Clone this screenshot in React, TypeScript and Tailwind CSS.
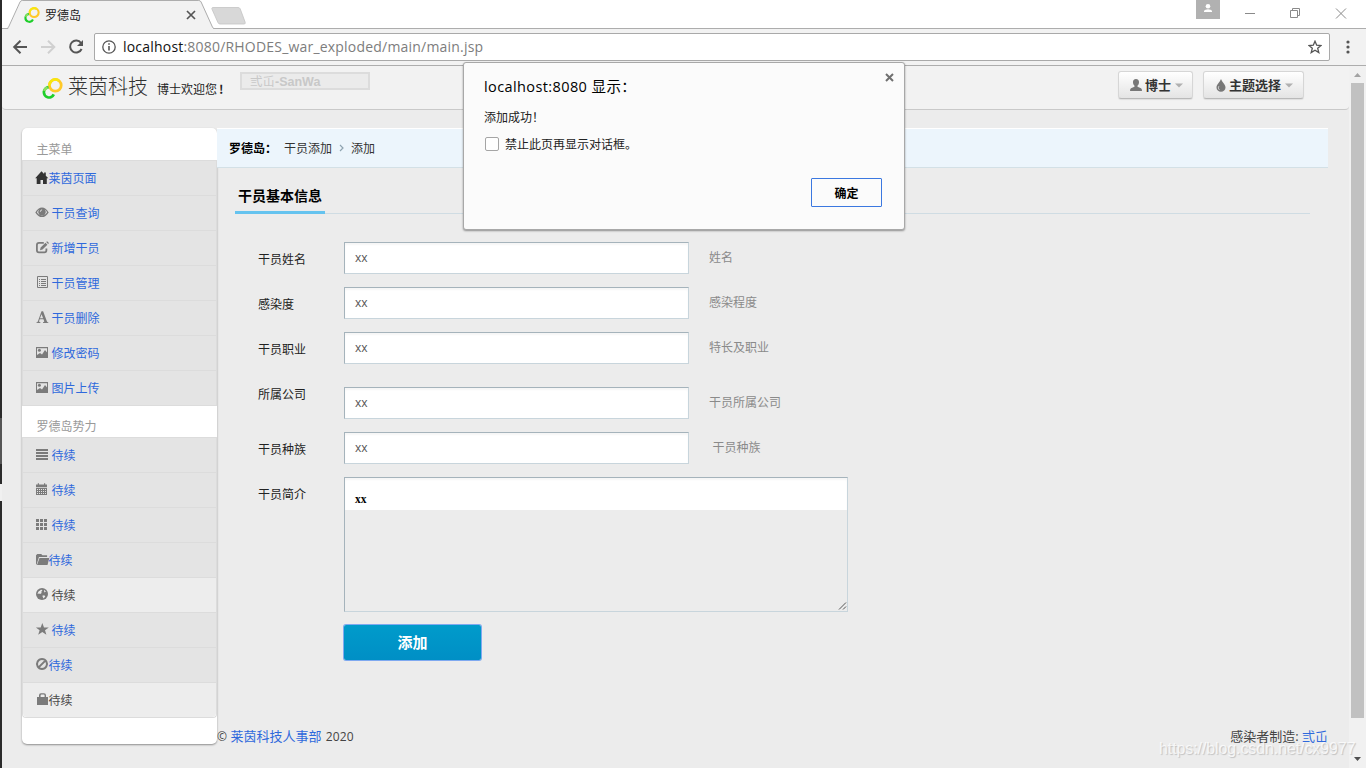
import type { ReactNode } from 'react';

const g = '#7b7b7b';

function Logo({ className }: { className: string }) {
  return (
    <svg className={className} viewBox="0 0 20 20" fill="none">
      <path d="M7 8.700A4.900 4.900 0 1 0 11.200 15.600" stroke="#1fce2b" strokeWidth="2.600" />
      <path d="M2.100 12.200a4.900 4.900 0 0 1 3.200-3.300" stroke="#8be060" strokeWidth="2.600" />
      <circle cx="12.700" cy="7" r="5.600" stroke="#ffc928" strokeWidth="2.600" />
      <path d="M7.100 7a5.600 5.600 0 0 1 9-4.400" stroke="#f8e60e" strokeWidth="2.600" />
    </svg>
  );
}

function Icon({ children, w = 14 }: { children: ReactNode; w?: number }) {
  return (
    <svg width={w} height="14" viewBox={`0 0 ${w} 14`} fill={g} className="shrink-0 overflow-visible">
      {children}
    </svg>
  );
}

const icons: Record<string, ReactNode> = {
  home: <path fill="#333" d="M5.500 .3-.8 7.200H.7V13h3.800V9h2.500v4h3.800V7.200H12.300L9.800 4.700V1.500H8.100v1.400z" />,
  eye: (
    <>
      <path fillRule="evenodd" d="M-.7 6.400C1.300 3.200 3.500 1.500 6 1.500S10.700 3.200 12.700 6.400C10.700 9.600 8.500 11.100 6 11.100S1.300 9.600-.7 6.400zM.9 6.300C2.300 8.600 4.100 9.800 6 9.800s3.700-1.200 5.100-3.500C10.300 5 9.400 4.100 8.600 3.600a3.600 3.600 0 1 1-5.200 0C2.600 4.100 1.700 5 .9 6.300z" />
      <circle cx="6" cy="5.700" r="2.600" />
      <path d="M4.300 5.800a2 2 0 0 1 1.800-2" stroke="#e4e4e4" strokeWidth=".9" fill="none" />
    </>
  ),
  edit: (
    <>
      <path d="M7.800 1.900H3A2.100 2.100 0 0 0 .9 4v5.300A2.100 2.100 0 0 0 3 11.400h5.300a2.100 2.100 0 0 0 2.100-2.100V7.500" fill="none" stroke={g} strokeWidth="1.800" />
      <path d="M4 9.200l.6-2.600L9.500 1.800l1.900 1.900L6.500 8.500zM10.200 1.100l.9-.9 1.900 1.900-.9.900z" />
    </>
  ),
  list: (
    <>
      <path d="M1.500 .5h10v11h-10z" fill="none" stroke={g} strokeWidth="1" />
      <path d="M3 3h1v1H3zM5 3h5v1H5zM3 5h1v1H3zM5 5h5v1H5zM3 7h1v1H3zM5 7h5v1H5zM3 9h1v1H3zM5 9h5v1H5z" />
    </>
  ),
  font: <path fillRule="evenodd" d="M.5 12v-.8c.9-.1 1.200-.5 1.500-1.300L5.500.3h1.600l3.700 9.600c.3.8.7 1.200 1.500 1.300v.8H7v-.8c1.200-.1 1.400-.4 1.100-1.200L7.500 8.300H3.700l-.5 1.500c-.3.900.1 1.300 1.200 1.400v.8zM4 7.300h3.100L5.600 3.200z" />,
  image: (
    <>
      <path fillRule="evenodd" d="M0 1h12v11H0zM1 2.200v8.300h10V2.200z" />
      <circle cx="3.400" cy="4.300" r="1.500" />
      <path d="M1 11V9l3-2 2 1.500L9 4l2.500 3v4z" />
    </>
  ),
  lines: <path d="M0 1h12v2H0zM0 4h12v2H0zM0 7h12v2H0zM0 10h12v2H0z" />,
  calendar: (
    <>
      <path d="M0 1.500h1.800V.3h1.200v1.200h5V.3h1.200v1.200H11V4H0zM0 4.700h11V12H0z" />
      <path d="M1 6h1v1H1zM3 6h1v1H3zM5 6h1v1H5zM7 6h1v1H7zM9 6h1v1H9zM1 8h1v1H1zM3 8h1v1H3zM5 8h1v1H5zM7 8h1v1H7zM9 8h1v1H9zM1 10h1v1H1zM3 10h1v1H3zM5 10h1v1H5zM7 10h1v1H7zM9 10h1v1H9z" fill="#e4e4e4" />
    </>
  ),
  grid: <path d="M0 1h3v3H0zM4 1h3v3H4zM8 1h3v3H8zM0 5h3v3H0zM4 5h3v3H4zM8 5h3v3H8zM0 9h3v3H0zM4 9h3v3H4zM8 9h3v3H8z" />,
  folder: <path d="M0 11.500V2.300L1.300 1h3.900l1.200 1.200h4.700V4H3L.6 11.500zM3.500 4.900H13.300L11.500 12H1z" />,
  globe: (
    <>
      <circle cx="6" cy="6" r="6" />
      <path d="M2.300 3.700 5 1.800l1.500.2L5.300 3.800 5.600 5 4.200 6 3 5.500 1.500 6zM8 1.700l2.300 2.200-1-.1L8.300 4.600zM6.300 7.800l1.900-.6L9.300 8.500 7.500 10.400z" fill="#ececec" />
    </>
  ),
  star: <path d="M6.300 0 8 4.400h4.800L9 7.200l1.400 4.600-4.100-2.800-4.100 2.800L3.600 7.200-.1 4.400h4.800z" />,
  ban: <path d="M6 1a5 5 0 1 0 .01 0M2.600 9.400 9.400 2.600" fill="none" stroke={g} strokeWidth="2" />,
  lock: <path fillRule="evenodd" d="M1 4h2V2.200A2 2 0 0 1 5 .2h3a2 2 0 0 1 2 2V4H12v8H1zM4.600 4h4V2.500a.9.9 0 0 0-.9-.9H5.500a.9.9 0 0 0-.9.9z" />,
};

type Item = { icon: string; label: string; tight?: boolean; plain?: boolean };

const mainMenu: Item[] = [
  { icon: 'home', label: '莱茵页面', tight: true },
  { icon: 'eye', label: '干员查询' },
  { icon: 'edit', label: '新增干员' },
  { icon: 'list', label: '干员管理' },
  { icon: 'font', label: '干员删除' },
  { icon: 'image', label: '修改密码' },
  { icon: 'image', label: '图片上传' },
];

const forceMenu: Item[] = [
  { icon: 'lines', label: '待续' },
  { icon: 'calendar', label: '待续' },
  { icon: 'grid', label: '待续' },
  { icon: 'folder', label: '待续', tight: true },
  { icon: 'globe', label: '待续', plain: true },
  { icon: 'star', label: '待续' },
  { icon: 'ban', label: '待续', tight: true },
  { icon: 'lock', label: '待续', tight: true, plain: true },
];

function Menu({ items, last }: { items: Item[]; last?: boolean }) {
  return (
    <ul className={`border-x border-b border-[#dcdcdc] ${last ? 'rounded-b-[4px]' : ''}`}>
      {items.map((it, i) => (
        <li
          key={i}
          className={`flex h-[35px] items-center border-t border-[#dcdcdc] pl-[13px] ${it.plain ? 'bg-[#ededed] text-[#4a4a4a]' : 'bg-[#e4e4e4] text-[#2f69dc]'} ${last && i === items.length - 1 ? 'rounded-b-[4px]' : ''}`}
        >
          <Icon>{icons[it.icon]}</Icon>
          <span className={it.tight ? '-ml-[1.500px]' : 'ml-[1.500px]'}>{it.label}</span>
        </li>
      ))}
    </ul>
  );
}

const fields = [
  { label: '干员姓名', hint: '姓名' },
  { label: '感染度', hint: '感染程度' },
  { label: '干员职业', hint: '特长及职业' },
  { label: '所属公司', hint: '干员所属公司', low: true },
  { label: '干员种族', hint: '干员种族', shift: true },
];

function TabStrip() {
  return (
    <div className="relative flex h-[28px] bg-white">
      <svg className="absolute left-0 top-0" width="260" height="29" viewBox="0 0 260 29">
        <path d="M6 29 18.500 2q.6-1.500 2-1.500H197q1.500 0 2.200 1.500L211.500 29z" fill="#f2f2f2" />
        <path d="M0 28.500H4.500q1.400 0 2-1.300L18 2q.7-1.500 2.200-1.500H196.800q1.600 0 2.300 1.500l11.400 25.200q.6 1.300 2 1.300H260" fill="none" stroke="#adadad" />
        <path d="M210.500 7.500h25.500q1.500 0 2.200 1.300l5 13.500q.5 1.700-1.200 1.700h-24q-1.400 0-2-1.300l-6-13.500q-.5-1.500.5-1.700z" fill="#d8d8d8" stroke="#c4c4c4" strokeWidth=".8" />
      </svg>
      <div className="relative flex h-[28px] w-[205px] items-center pl-[22px] pr-[11px] pt-[2px]">
        <Logo className="size-[16px]" />
        <span className="ml-[5px] text-[12px] leading-[16px] text-[#222]">罗德岛</span>
        <svg className="ml-auto" width="10" height="10" viewBox="0 0 10 10">
          <path d="M1 1l8 8M9 1l-8 8" stroke="#555" strokeWidth="1.700" />
        </svg>
      </div>
      <div className="ml-auto flex h-[28px]">
        <div className="h-[19px] w-[24px] bg-[#b1b1b1]">
          <svg width="24" height="19" viewBox="0 0 24 19" fill="#fff">
            <circle cx="12" cy="6.300" r="2.300" />
            <path d="M8 12V10.800Q9 9.300 12 9.300t4 1.500V12z" />
          </svg>
        </div>
        <svg width="146" height="28" viewBox="0 0 146 28" fill="none" stroke="#8a8a8a">
          <path d="M25 13.500h10M70.500 10.500h7v7h-7zM72.500 10.500v-2h7v7h-2M116 8.500l10 10M126 8.500l-10 10" />
        </svg>
      </div>
    </div>
  );
}

function Toolbar() {
  return (
    <div className="flex h-[38px] items-center border-b border-t border-[#adadad] bg-[#f2f2f2] pl-[10px]">
      <svg width="82" height="36" viewBox="0 0 82 36" fill="none" strokeWidth="2">
        <path d="M15 18H2.500M8.500 11.700 2.200 18l6.300 6.300" stroke="#555" />
        <path d="M29 18h12.500M36 11.700 42.300 18 36 24.300" stroke="#d0d0d0" />
        <path d="M69 14A6 6 0 1 0 69.600 20" stroke="#555" />
        <path d="M71 11v6h-6z" fill="#555" />
      </svg>
      <div className="flex h-[28px] w-[1236px] items-center rounded-[2px] border border-[#a9a9a9] bg-white pl-[7px] pr-[7px]">
        <svg width="14" height="14" viewBox="0 0 14 14">
          <circle cx="7" cy="7" r="6.200" fill="none" stroke="#555" strokeWidth="1.300" />
          <path d="M6.200 6h1.600v4.500H6.200zM6.200 3.300h1.600v1.500H6.200z" fill="#555" />
        </svg>
        <span className="ml-[7px] whitespace-nowrap font-['Open_Sans','Noto_Sans',sans-serif] text-[14px] leading-[20px] tracking-[0.2px] text-[#7d7d7d]">
          <span className="text-[#111]">localhost</span>:8080/RHODES_war_exploded/main/main.jsp
        </span>
        <svg className="ml-auto" width="14" height="14" viewBox="0 0 14 14">
          <path d="M7 1.200 8.700 5.200l4.300.3-3.300 2.800 1.100 4.200L7 10.200l-3.800 2.300 1.100-4.200L1 5.500l4.300-.3z" fill="none" stroke="#555" strokeWidth="1.300" />
        </svg>
      </div>
      <svg className="ml-[16px]" width="4" height="14" viewBox="0 0 4 14" fill="#555">
        <circle cx="2" cy="2" r="1.600" />
        <circle cx="2" cy="7" r="1.600" />
        <circle cx="2" cy="12" r="1.600" />
      </svg>
    </div>
  );
}

function HeaderButton({ children, className }: { children: ReactNode; className: string }) {
  return (
    <div className={`flex h-[28px] items-center rounded-[3px] border border-[#d6d6d6] border-b-[#b9b9b9] bg-linear-to-b from-white to-[#e4e4e4] text-[13px] font-bold leading-[20px] text-[#333] shadow-[0_1px_1px_rgba(0,0,0,0.08)] ${className}`}>
      {children}
      <svg className="ml-[4px]" width="8" height="5" viewBox="0 0 8 5">
        <path d="M0 .5h8l-4 4z" fill="#b0b0b0" />
      </svg>
    </div>
  );
}

function Header() {
  return (
    <header className="flex h-[44px] items-start rounded-b-[4px] border-b border-[#c9c9c9] bg-[#f2f2f2] pl-[39.500px]">
      <Logo className="mt-[11.500px] size-[21px]" />
      <span className="ml-[5.500px] mt-[8px] w-[89px] text-[20px] font-light leading-[24px] text-[#333]">莱茵科技</span>
      <span className="mt-[15px] w-[83px] whitespace-nowrap text-[12px] leading-[16px] text-[#222]">
        博士欢迎您<b className="ml-[2px]">!</b>
      </span>
      <div className="mt-[6px] flex h-[18px] w-[130px] items-center border-2 border-[#dcdcdc] bg-[#ebebeb] pl-[8px] pt-px font-['Liberation_Sans','Noto_Sans_CJK_SC',sans-serif] text-[12.500px] leading-[14px] text-[#c8c8c8]">
        弎屲<b>-SanWa</b>
      </div>
      <HeaderButton className="ml-auto mt-[5px] w-[75px] pl-[11px]">
        <svg width="12" height="12" viewBox="0 0 12 12" fill="#777" className="mr-[3px]">
          <path d="M6 0C8 0 9.200 1.300 9 3.500 8.900 5 8.300 6 7.500 6.700v1L11 9.300q1 .5 1 2.700H0q0-2.200 1-2.700l3.500-1.600v-1C3.700 6 3.100 5 3 3.500 2.800 1.300 4 0 6 0z" />
        </svg>
        博士
      </HeaderButton>
      <HeaderButton className="ml-[10px] mr-[45px] mt-[5px] w-[101px] pl-[12px]">
        <svg width="10" height="13" viewBox="0 0 10 13" className="mr-[3px]">
          <path d="M5 0c1 3 4.500 5.300 4.500 8.500a4.500 4.300 0 0 1-9 0C.5 5.300 4 3 5 0z" fill="#777" />
          <path d="M2.800 7.300C2 9 2.500 10 3.500 10.800" stroke="#ddd" fill="none" />
        </svg>
        主题选择
      </HeaderButton>
    </header>
  );
}

function Sidebar() {
  return (
    <aside className="h-[616px] w-[195px] shrink-0 rounded-[5px] bg-white shadow-[0_1px_2px_rgba(0,0,0,0.4)]">
      <div className="flex h-[32px] items-end pl-[14.500px] leading-[22px] text-[#999]">主菜单</div>
      <Menu items={mainMenu} />
      <div className="flex h-[31px] items-end pl-[14.500px] leading-[22px] text-[#999]">罗德岛势力</div>
      <Menu items={forceMenu} last />
    </aside>
  );
}

function Form() {
  return (
    <div className="flex flex-col pl-[41px] pt-[28px] text-[#222]">
      {fields.map((f) => (
        <div key={f.label} className={`flex items-start ${f.low ? 'h-[55px]' : 'h-[45px]'}`}>
          <label className="w-[86px] pt-[8px] leading-[18px]">{f.label}</label>
          <div className={`flex h-[32px] items-center ${f.low ? 'mt-[10px]' : ''}`}>
            <div className="h-[32px] w-[345px] border border-[#c8d5dc] border-l-[#a5b3bb] border-t-[#a5b3bb] bg-white pl-[10px] font-['Open_Sans',sans-serif] leading-[30px] text-[#555] shadow-[inset_0_2px_2px_rgba(0,0,0,0.04)]">
              xx
            </div>
            <span className={`-mt-[2px] text-[#8a8a8a] ${f.shift ? 'ml-[23.500px]' : 'ml-[20px]'}`}>{f.hint}</span>
          </div>
        </div>
      ))}
      <div className="flex items-start">
        <label className="w-[86px] pt-[8px] leading-[18px]">干员简介</label>
        <div className="flex h-[135px] w-[504px] flex-col border border-[#c8d5dc] border-l-[#a5b3bb] border-t-[#a5b3bb]">
          <div className="h-[32px] bg-white pl-[10px] pt-[12px] font-['Liberation_Serif',serif] text-[11.500px] font-bold leading-[18px] text-black shadow-[inset_0_2px_2px_rgba(0,0,0,0.04)]">
            xx
          </div>
          <svg className="ml-auto mt-auto" width="10" height="10" viewBox="0 0 10 10">
            <path d="M2 8.500 9 1.500M6 8.500 9 5.500" stroke="#555" />
          </svg>
        </div>
      </div>
      <div className="ml-[86px] mt-[13px] flex h-[35px] w-[137px] items-center justify-center rounded-[2px] bg-linear-to-b from-[#009bcb] to-[#008fc5] text-[15px] font-bold text-white shadow-[0_0_0_1px_#7fa9f0]">
        添加
      </div>
    </div>
  );
}

function Main() {
  return (
    <main className="flex w-[1111px] flex-col">
      <div className="flex h-[40px] items-center border-b border-t border-b-[#d3e0e6] border-t-white bg-[#ecf5fc] pl-[12px] text-[#333]">
        <b className="w-[55px] whitespace-nowrap text-black">罗德岛：</b>
        <span>干员添加</span>
        <svg className="mx-[7px]" width="5" height="8" viewBox="0 0 5 8">
          <path d="M1 1l3 3-3 3" fill="none" stroke="#8ea3b0" strokeWidth="1.200" />
        </svg>
        <span>添加</span>
      </div>
      <div className="ml-[18px] mr-[18px] flex h-[46px] items-stretch border-b border-[#cfdce3]">
        <h1 className="-mb-px w-[90px] border-b-[3px] border-[#65c3ef] pl-[3px] pt-[17px] text-[14px] font-bold leading-[20px] text-black">干员基本信息</h1>
      </div>
      <Form />
      <footer className="mt-[66px] flex justify-between whitespace-nowrap font-['Open_Sans','Noto_Sans_CJK_SC',sans-serif] text-[12px] leading-[20px] text-[#444]">
        <span>
          © <span className="ml-[0.500px] text-[13px] text-[#2f69dc]">莱茵科技人事部</span>
          <span className="ml-[4px] tracking-[0.2px]">2020</span>
        </span>
        <span className="text-[13px]">
          感染者制造: <span className="text-[#2f69dc]">弎屲</span>
        </span>
      </footer>
    </main>
  );
}

function Dialog() {
  return (
    <div className="absolute left-[463px] top-[62px] flex h-[168px] w-[442px] flex-col rounded-[3px] border border-[#a8a8a8] bg-[#fbfbfb] pl-[20px] pr-[22px] shadow-[0_1px_2px_rgba(0,0,0,0.4)]">
      <svg className="absolute right-[10px] top-[10px]" width="9" height="9" viewBox="0 0 9 9">
        <path d="M1 1l7 7M8 1l-7 7" stroke="#707070" strokeWidth="2" />
      </svg>
      <div className="mt-[13px] font-['Open_Sans','Noto_Sans_CJK_SC',sans-serif] text-[14.500px] leading-[22px] tracking-[0.400px] text-black">
        localhost:8080 显示：
      </div>
      <div className="mt-[10px] leading-[18px] text-[#222]">添加成功！</div>
      <div className="mt-[9px] flex items-center leading-[18px] text-[#222]">
        <span className="ml-px mr-[6px] size-[14px] rounded-[2px] border border-[#a5a5a5] bg-white" />
        禁止此页再显示对话框。
      </div>
      <div className="ml-auto mt-[25px] flex h-[29px] w-[71px] items-center justify-center rounded-[1px] border border-[#3b78e0] font-bold text-black">确定</div>
    </div>
  );
}

function Scrollbar() {
  return (
    <div className="flex w-[17px] flex-col bg-[#f1f1f1] pl-[2px]">
      <svg width="13" height="17" viewBox="0 0 13 17">
        <path d="M3 11h7L6.500 7z" fill="#a3a3a3" />
      </svg>
      <div className="h-[635px] w-[13px] bg-[#c1c1c1]" />
      <svg className="mt-auto" width="13" height="17" viewBox="0 0 13 17">
        <path d="M3 6h7l-3.500 4z" fill="#505050" />
      </svg>
    </div>
  );
}

export default function App() {
  return (
    <div className="relative flex h-[768px] w-[1366px] overflow-hidden bg-[#ececec] font-['Noto_Sans_CJK_SC',sans-serif] text-[12px]">
      <div className="flex w-[2px] flex-col bg-[#2b2b2b] pt-[418px]">
        <div className="h-[46px] bg-[#555]" />
        <div className="mt-[20px] h-[17px] bg-[#f0f0f0]" />
      </div>
      <div className="flex w-[1364px] flex-col">
        <TabStrip />
        <Toolbar />
        <div className="flex h-[702px]">
          <div className="flex w-[1347px] flex-col">
            <Header />
            <div className="flex pl-[20px] pt-[18px]">
              <Sidebar />
              <Main />
            </div>
          </div>
          <Scrollbar />
        </div>
      </div>
      <Dialog />
      <div className="absolute left-[1159px] top-[738px] whitespace-nowrap font-['Liberation_Sans',sans-serif] text-[16px] leading-[22px] tracking-[-0.1px] text-white/75 [text-shadow:1px_1px_1px_rgba(0,0,0,0.18)]">
        https://blog.csdn.net/cx9977
      </div>
    </div>
  );
}
